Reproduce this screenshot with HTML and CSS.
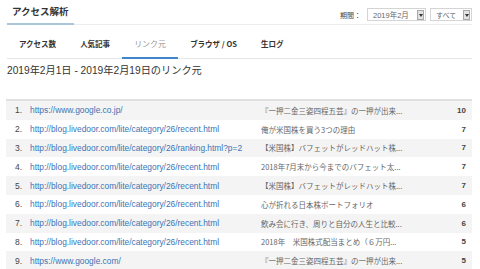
FILE: index.html
```html
<!DOCTYPE html>
<html lang="ja">
<head>
<meta charset="utf-8">
<title>アクセス解析</title>
<link rel="stylesheet" href="styles.css">
</head>
<body>
<div class="page">
  <header class="head">
    <h1 class="title">アクセス解析</h1>
    <div class="controls">
      <span class="label">期間：</span>
      <div class="select sel-month"><span>2019年2月</span><i class="arrow"></i></div>
      <div class="select sel-all"><span>すべて</span><i class="arrow"></i></div>
    </div>
  </header>
  <nav class="tabs">
    <a class="tab">アクセス数</a>
    <a class="tab">人気記事</a>
    <a class="tab active">リンク元</a>
    <a class="tab">ブラウザ / OS</a>
    <a class="tab">生ログ</a>
  </nav>
  <p class="range">2019年2月1日 - 2019年2月19日のリンク元</p>
  <div class="table">
    <div class="row"><span class="num">1.</span><a class="url">https://www.google.co.jp/</a><span class="ttl">『一押二金三姿四程五芸』の一押が出来...</span><span class="cnt">10</span></div>
    <div class="row"><span class="num">2.</span><a class="url">http://blog.livedoor.com/lite/category/26/recent.html</a><span class="ttl">俺が米国株を買う3つの理由</span><span class="cnt">7</span></div>
    <div class="row"><span class="num">3.</span><a class="url">http://blog.livedoor.com/lite/category/26/ranking.html?p=2</a><span class="ttl">【米国株】バフェットがレッドハット株...</span><span class="cnt">7</span></div>
    <div class="row"><span class="num">4.</span><a class="url">http://blog.livedoor.com/lite/category/26/recent.html</a><span class="ttl">2018年7月末から今までのバフェット太...</span><span class="cnt">7</span></div>
    <div class="row"><span class="num">5.</span><a class="url">http://blog.livedoor.com/lite/category/26/recent.html</a><span class="ttl">【米国株】バフェットがレッドハット株...</span><span class="cnt">7</span></div>
    <div class="row"><span class="num">6.</span><a class="url">http://blog.livedoor.com/lite/category/26/recent.html</a><span class="ttl">心が折れる日本株ポートフォリオ</span><span class="cnt">6</span></div>
    <div class="row"><span class="num">7.</span><a class="url">http://blog.livedoor.com/lite/category/26/recent.html</a><span class="ttl">飲み会に行き、周りと自分の人生と比較...</span><span class="cnt">6</span></div>
    <div class="row"><span class="num">8.</span><a class="url">http://blog.livedoor.com/lite/category/26/recent.html</a><span class="ttl">2018年　米国株式配当まとめ（６万円...</span><span class="cnt">5</span></div>
    <div class="row"><span class="num">9.</span><a class="url">https://www.google.com/</a><span class="ttl">『一押二金三姿四程五芸』の一押が出来...</span><span class="cnt">5</span></div>
  </div>
</div>
</body>
</html>
```

FILE: styles.css
```css
* { box-sizing: border-box; }
html, body { margin: 0; padding: 0; background: #fff; }
body {
  font-family: "Liberation Sans", "Noto Sans CJK JP", sans-serif;
  color: #333;
  width: 480px;
  height: 269px;
  overflow: hidden;
}
.page { padding: 0 8px 0 7px; }

.head {
  display: flex;
  align-items: flex-end;
  justify-content: space-between;
  height: 25px;
  border-bottom: 1px solid #ececec;
}
.title {
  margin: 0 0 -1px 0;
  padding: 0 5px 5px;
  font-size: 9.5px;
  line-height: 13px;
  font-weight: bold;
  color: #333;
  border-bottom: 2px solid #a9c6da;
  font-family: "Noto Sans CJK JP", sans-serif;
}
.controls {
  display: flex;
  align-items: center;
  align-self: flex-start;
  margin-top: 8px;
  gap: 4px;
}
.label {
  font-size: 7px;
  color: #444;
  font-family: "Noto Sans CJK JP", sans-serif;
  margin-right: 2px;
}
.select {
  display: flex;
  align-items: center;
  justify-content: space-between;
  height: 13px;
  border: 1px solid #d4d4d4;
  background: #fff;
  padding: 0 1px 0 5px;
  font-size: 7.5px;
  color: #666;
}
.sel-month { width: 59px; }
.sel-all { width: 42px; font-family: "Noto Sans CJK JP", sans-serif; font-size: 7px; }
.arrow {
  position: relative;
  display: block;
  width: 7px;
  height: 10px;
  background: #e2e2e2;
  border: 1px solid #a8a8a8;
}
.arrow::after {
  content: "";
  position: absolute;
  left: 1px;
  top: 3px;
  border-left: 2px solid transparent;
  border-right: 2px solid transparent;
  border-top: 3px solid #333;
}

.tabs {
  display: flex;
  height: 34px;
  align-items: stretch;
  border-bottom: 1px solid #e6e6e6;
  padding-left: 0;
}
.tab {
  display: flex;
  align-items: center;
  padding: 4px 12px 0;
  font-size: 7.5px;
  font-weight: bold;
  color: #333;
  font-family: "Noto Sans CJK JP", sans-serif;
  border-bottom: 2px solid transparent;
  margin-bottom: -1px;
}
.tab.active {
  color: #999;
  font-weight: normal;
  font-size: 8px;
  border-bottom-color: #3f87c9;
}

.range {
  margin: 0;
  padding-top: 6px;
  font-size: 10.2px;
  line-height: 12px;
  color: #333;
  height: 40px;
}

.table {
  margin-left: -1px;
  border-top: 2px solid #e0e0e0;
}
.row {
  display: grid;
  grid-template-columns: 24px 231px 1fr 30px;
  align-items: center;
  height: 18.8px;
}
.row:nth-child(odd) { background: #f4f4f4; }
.num {
  text-align: right;
  padding-right: 8px;
  font-size: 8.5px;
  color: #444;
}
.url {
  font-size: 8.4px;
  color: #3a74b6;
  white-space: nowrap;
  overflow: hidden;
}
.ttl {
  font-size: 7.5px;
  color: #666;
  white-space: nowrap;
  overflow: hidden;
  font-family: "Noto Sans CJK JP", sans-serif;
}
.cnt {
  text-align: right;
  padding-right: 6px;
  font-size: 8px;
  font-weight: bold;
  color: #444;
}
```
